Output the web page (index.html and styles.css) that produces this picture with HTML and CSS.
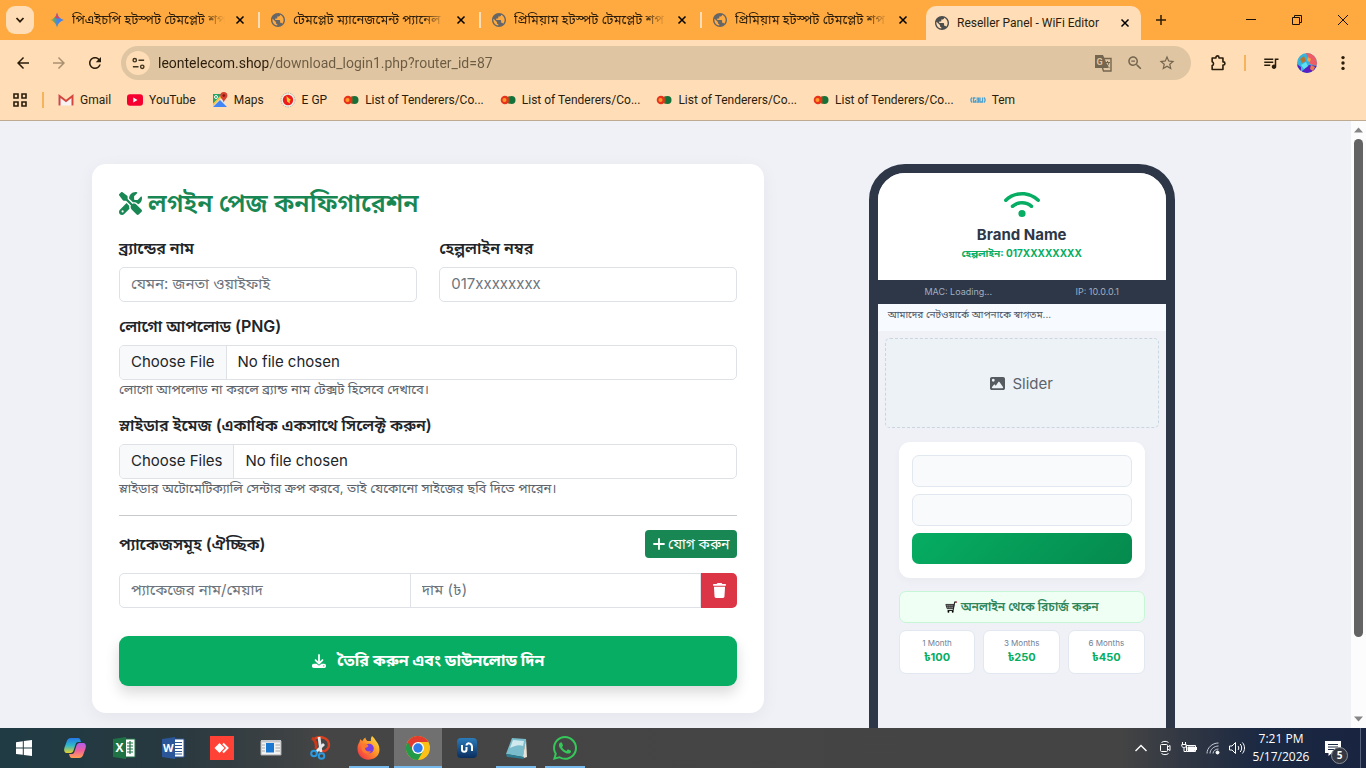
FILE: index.html
```html
<!DOCTYPE html>
<html lang="bn">
<head>
    <meta charset="UTF-8">
    <meta name="viewport" content="width=device-width, initial-scale=1.0">
    <title>Reseller Panel - WiFi Editor</title>
    <link rel="stylesheet" href="styles.css">
</head>
<body>
    <!-- Shared icons -->
    <svg class="sprite" aria-hidden="true">
        <symbol id="globe" viewBox="2 2 20 20"><path d="M12 2C6.48 2 2 6.48 2 12s4.48 10 10 10 10-4.48 10-10S17.52 2 12 2zm-1 17.93c-3.95-.49-7-3.85-7-7.93 0-.62.08-1.21.21-1.79L9 15v1c0 1.1.9 2 2 2v1.93zm6.9-2.54c-.26-.81-1-1.39-1.9-1.39h-1v-3c0-.55-.45-1-1-1H8v-2h2c.55 0 1-.45 1-1V7h2c1.1 0 2-.9 2-2v-.41c2.93 1.19 5 4.06 5 7.41 0 2.08-.8 3.97-2.1 5.39z"/></symbol>
        <symbol id="close" viewBox="0 0 16 16"><path d="M4.500 4.500l7 7M11.500 4.500l-7 7" stroke="currentColor" stroke-width="1.500" fill="none"/></symbol>
        <symbol id="arrow" viewBox="0 0 24 24"><path d="M20 11H7.830l5.590-5.590L12 4l-8 8 8 8 1.410-1.410L7.830 13H20v-2z"/></symbol>
        <symbol id="tender" viewBox="0 0 16 16">
            <circle cx="11.500" cy="8" r="4" fill="#14713a"/>
            <circle cx="5" cy="8" r="4.300" fill="#e8321c"/>
            <circle cx="4.500" cy="8" r="2" fill="#ff9a2a"/>
            <path d="M9 4v8" stroke="#8b5a1c"/>
        </symbol>
    </svg>

    <header class="browser">
        <div class="tab-strip">
            <button class="tab-search" aria-label="Search tabs"><svg viewBox="0 0 16 16"><path d="M4.500 6l3.500 3.700L11.500 6" fill="none" stroke="#2b1d0b" stroke-width="1.800"/></svg></button>
            <div class="tab">
                <svg class="favicon" viewBox="1 1 14 14">
                    <defs><linearGradient id="gem" x1="0" y1="0" x2="1" y2="0"><stop offset="0" stop-color="#f9a825"/><stop offset=".3" stop-color="#5fa56b"/><stop offset=".55" stop-color="#4285f4"/><stop offset="1" stop-color="#3f7de8"/></linearGradient></defs>
                    <path d="M8 .5C9.300 5 11 6.700 15 8c-4 1.300-5.700 3-7 7.500C6.700 11 5 9.300 1 8c4-1.300 5.700-3 7-7.500z" fill="url(#gem)"/>
                    <path d="M8 .5c.8 3.500 1.500 5 3 6.200L6 6c1-1.300 1.500-3 2-5.500z" fill="#e4405a"/>
                </svg>
                <span class="tab-title">পিএইচপি হটস্পট টেমপ্লেট শপ</span>
                <button class="tab-close" aria-label="Close"><svg><use href="#close"/></svg></button>
                <i class="tab-line"></i>
            </div>
            <div class="tab">
                <svg class="favicon"><use href="#globe"/></svg>
                <span class="tab-title">টেমপ্লেট ম্যানেজমেন্ট প্যানেল</span>
                <button class="tab-close" aria-label="Close"><svg><use href="#close"/></svg></button>
                <i class="tab-line"></i>
            </div>
            <div class="tab">
                <svg class="favicon"><use href="#globe"/></svg>
                <span class="tab-title">প্রিমিয়াম হটস্পট টেমপ্লেট শপ</span>
                <button class="tab-close" aria-label="Close"><svg><use href="#close"/></svg></button>
                <i class="tab-line"></i>
            </div>
            <div class="tab">
                <svg class="favicon"><use href="#globe"/></svg>
                <span class="tab-title">প্রিমিয়াম হটস্পট টেমপ্লেট শপ</span>
                <button class="tab-close" aria-label="Close"><svg><use href="#close"/></svg></button>
                <i class="tab-line hidden"></i>
            </div>
            <div class="tab active">
                <svg class="favicon"><use href="#globe"/></svg>
                <span class="tab-title">Reseller Panel - WiFi Editor</span>
                <button class="tab-close" aria-label="Close"><svg><use href="#close"/></svg></button>
            </div>
            <button class="new-tab" aria-label="New tab"><svg viewBox="0 0 16 16"><path d="M8 3v10M3 8h10" stroke="#2b1d0b" stroke-width="1.500"/></svg></button>
            <div class="window-buttons">
                <button aria-label="Minimize"><svg viewBox="0 0 16 16"><path d="M3 7.500h10"/></svg></button>
                <button aria-label="Restore"><svg viewBox="0 0 16 16"><path d="M3.500 5.500h7v7h-7zM5.500 5.500v-2h7v7h-2"/></svg></button>
                <button aria-label="Close window"><svg viewBox="0 0 16 16"><path d="M3 3l10 10M13 3L3 13"/></svg></button>
            </div>
        </div>

        <div class="toolbar">
            <button aria-label="Back"><svg><use href="#arrow"/></svg></button>
            <button class="forward" aria-label="Forward"><svg><use href="#arrow"/></svg></button>
            <button aria-label="Reload"><svg viewBox="0 0 24 24"><path d="M17.650 6.350C16.200 4.900 14.210 4 12 4c-4.420 0-7.990 3.580-7.990 8s3.570 8 7.990 8c3.730 0 6.840-2.550 7.730-6h-2.080c-.82 2.330-3.040 4-5.650 4-3.310 0-6-2.690-6-6s2.690-6 6-6c1.660 0 3.140.69 4.220 1.780L13 11h7V4l-2.350 2.350z"/></svg></button>
            <div class="address">
                <button class="site-info" aria-label="Site information"><svg viewBox="0 0 16 16"><g fill="none" stroke="#40331f" stroke-width="1.500"><circle cx="4" cy="4.500" r="1.800"/><circle cx="12" cy="11.500" r="1.800"/><path d="M8 4.500h6M2 11.500h6"/></g></svg></button>
                <input type="text" aria-label="Address" value="leontelecom.shop/download_login1.php?router_id=87">
                <button aria-label="Translate"><svg viewBox="1 1 18 18"><path d="M2 2h8l5.500 13H2z" fill="#74664f"/><path d="M9.500 5.500H18v12.500h-7.500l-1-3" fill="none" stroke="#74664f" stroke-width="1.400"/><path d="M12 9.500h5M14.500 8v1.500M16 9.500c-.6 2.500-2 4-3.500 5M12.800 10.500c.8 2 2 3.300 3.700 4.200" fill="none" stroke="#74664f"/><text x="3.500" y="12" font-family="Roboto, sans-serif" font-size="9" font-weight="700" fill="#dfc5a2">G</text></svg></button>
                <button aria-label="Zoom"><svg viewBox="0 0 24 24"><path d="M15.500 14h-.79l-.28-.27C15.410 12.590 16 11.110 16 9.500 16 5.910 13.090 3 9.500 3S3 5.910 3 9.500 5.910 16 9.500 16c1.610 0 3.090-.59 4.230-1.570l.27.28v.79l5 4.990L20.490 19l-4.990-5zm-6 0C7.010 14 5 11.990 5 9.500S7.010 5 9.500 5 14 7.010 14 9.500 11.990 14 9.500 14zM7 8.600h5v1.800H7z"/></svg></button>
                <button aria-label="Bookmark"><svg viewBox="0 0 24 24"><path d="M22 9.240l-7.190-.62L12 2 9.190 8.630 2 9.240l5.460 4.730L5.820 21 12 17.270 18.180 21l-1.630-7.030L22 9.240zM12 15.400l-3.760 2.270 1-4.280-3.320-2.880 4.380-.38L12 6.100l1.710 4.040 4.380.38-3.320 2.880 1 4.280L12 15.400z"/></svg></button>
            </div>
            <button class="extensions" aria-label="Extensions"><svg viewBox="0 0 20 20"><path d="M3.500 4.500h4.200v-.7a1.700 1.700 0 0 1 3.400 0v.7h4.400v4.300h.5a1.700 1.700 0 0 1 0 3.400h-.5v5H3.500v-4.300a2.200 2.200 0 0 0 0-4.200z" fill="none" stroke="#2b1d0b" stroke-width="1.800" stroke-linejoin="round"/></svg></button>
            <i class="bar-line"></i>
            <button class="media" aria-label="Media"><svg viewBox="0 0 24 24"><path d="M15 6H3v2h12V6zm0 4H3v2h12v-2zM3 16h8v-2H3v2zM17 6v8.180c-.31-.11-.65-.18-1-.18-1.660 0-3 1.340-3 3s1.340 3 3 3 3-1.340 3-3V8h3V6h-5z"/></svg></button>
            <button class="profile" aria-label="Profile"><svg viewBox="0 0 20 20"><defs><clipPath id="round"><circle cx="10" cy="10" r="10"/></clipPath></defs><g clip-path="url(#round)"><path fill="#35b4dd" d="M0 0h20v20H0z"/><path d="M9 0h11v13l-7-2z" fill="#ee5c66"/><path d="M3 20l9-8 8 1v7z" fill="#5a1fc2"/><path d="M3 6l4-3 2 5-4 2z" fill="#b9772c"/><path d="M11 4l3 2-1 3-3-1z" fill="#f3a04c"/><path d="M4 12l5-3 2 4-4 3z" fill="#5fe0ee"/><path d="M0 11l4 3v6H0z" fill="#5a1fc2"/><path d="M14 12l4 2-2 4-3-2z" fill="#e97b4a"/></g></svg></button>
            <button aria-label="Menu"><svg viewBox="0 0 16 16"><circle cx="8" cy="3.200" r="1.500"/><circle cx="8" cy="8" r="1.500"/><circle cx="8" cy="12.800" r="1.500"/></svg></button>
        </div>

        <nav class="bookmarks">
            <button class="apps" aria-label="Apps"><svg viewBox="0 0 16 16"><path d="M2 2h4v4H2zM10 2h4v4h-4zM2 10h4v4H2zM10 10h4v4h-4z" fill="none" stroke="#2b1d0b" stroke-width="1.600"/></svg></button>
            <i class="bar-line"></i>
            <a href="#"><svg viewBox="0 0 16 16"><path d="M.5 3.500L8 9l7.500-5.500V13.500H.5z" fill="#f6f3f2"/><path d="M1.500 13.500v-9.500L8 9l6.500-5v9.500" fill="none" stroke="#d4453c" stroke-width="2"/></svg>Gmail</a>
            <a href="#"><svg viewBox="0 0 16 16"><rect y="2.300" width="16" height="11.500" rx="3" fill="#f6002f"/><path d="M6.300 5.500v5l4.200-2.500z" fill="#fff"/></svg>YouTube</a>
            <a href="#"><svg viewBox="0 0 16 16"><path d="M1 2h12v13H1z" fill="#e8e4dc"/><path d="M1 2h9L1 12z" fill="#23a566"/><path d="M1 15l7-7 7 7z" fill="#4285f4"/><path d="M1 11.500L10.500 2H13L1 14z" fill="#f6c63a"/><path d="M11.800 0a3.600 3.600 0 0 1 3.600 3.600c0 2.700-2.600 3.400-3.600 7-1-3.600-3.600-4.300-3.600-7A3.600 3.600 0 0 1 11.800 0z" fill="#d8402f"/><circle cx="11.800" cy="3.600" r="1.300" fill="#7c1a14"/><circle cx="4" cy="5" r="1.500" fill="none" stroke="#fff"/></svg>Maps</a>
            <a href="#"><svg viewBox="0 0 16 16"><circle cx="8" cy="8" r="7" fill="#f0ede4" stroke="#b9b5a5" stroke-dasharray="1.500 1"/><circle cx="8" cy="8" r="5.200" fill="#ee1c1c"/><path d="M6.500 4l2 2 2.500 2-1.500.8.5 2.700-3-2z" fill="#ffcf2f"/></svg>E GP</a>
            <a href="#"><svg><use href="#tender"/></svg>List of Tenderers/Co...</a>
            <a href="#"><svg><use href="#tender"/></svg>List of Tenderers/Co...</a>
            <a href="#"><svg><use href="#tender"/></svg>List of Tenderers/Co...</a>
            <a href="#"><svg><use href="#tender"/></svg>List of Tenderers/Co...</a>
            <a href="#"><svg viewBox="0 0 16 16"><g fill="none" stroke="#4a9fd0" stroke-width="1.300"><path d="M2 5.500c-1.300 1.500-1.300 3.500 0 5M14 5.500c1.300 1.500 1.300 3.500 0 5M5.500 6H3.500v4h2V8M6.500 6.200h2v1.600h-2M8.500 8v2h-2M10 5.500V10h2.500V5.500"/></g></svg>Tem</a>
        </nav>
    </header>

    <div class="viewport">
        <main class="row">
            <div class="col-form">
                <form class="panel">
                    <h1><svg viewBox="0 0 512 512"><path d="M78.600 5C69.100-2.400 55.600-1.500 47 7L7 47c-8.500 8.500-9.400 22-2.100 31.600l80 104c4.500 5.900 11.600 9.400 19 9.400h54.100l109 109c-14.700 29-10 65.400 14.300 89.600l112 112c12.500 12.500 32.800 12.500 45.300 0l64-64c12.500-12.500 12.500-32.800 0-45.300l-112-112c-24.200-24.200-60.600-29-89.600-14.300l-109-109V104c0-7.500-3.500-14.500-9.400-19L78.600 5zM19.900 396.100C7.200 408.800 0 426.100 0 444.100C0 481.600 30.400 512 67.900 512c18 0 35.300-7.200 48-19.900L233.700 374.300c-7.800-20.900-9-43.600-3.600-65.100l-61.700-61.700L19.900 396.100zM512 144c0-10.500-1.100-20.700-3.200-30.500c-2.400-11.200-16.100-14.100-24.200-6l-63.900 63.900c-3 3-7.100 4.700-11.300 4.700H352c-8.800 0-16-7.200-16-16V102.600c0-4.200 1.700-8.300 4.700-11.300l63.900-63.900c8.100-8.100 5.200-21.800-6-24.200C388.700 1.100 378.500 0 368 0C288.500 0 224 64.500 224 144l0 .8 85.300 85.300c36-9.100 75.800 .5 104 28.700L429 274.500c49-23 83-72.800 83-130.500zM56 432a24 24 0 1 1 48 0 24 24 0 1 1 -48 0z"/></svg>লগইন পেজ কনফিগারেশন</h1>

                    <div class="two-cols">
                        <div class="field">
                            <label for="brand">ব্র্যান্ডের নাম</label>
                            <input class="control" type="text" id="brand" placeholder="যেমন: জনতা ওয়াইফাই">
                        </div>
                        <div class="field">
                            <label for="helpline">হেল্পলাইন নম্বর</label>
                            <input class="control" type="text" id="helpline" placeholder="017xxxxxxxx">
                        </div>
                    </div>

                    <div class="field">
                        <label for="logo">লোগো আপলোড (PNG)</label>
                        <input class="control" type="file" id="logo" accept="image/png">
                        <small>লোগো আপলোড না করলে ব্র্যান্ড নাম টেক্সট হিসেবে দেখাবে।</small>
                    </div>

                    <div class="field">
                        <label for="slides">স্লাইডার ইমেজ (একাধিক একসাথে সিলেক্ট করুন)</label>
                        <input class="control" type="file" id="slides" multiple>
                        <small>স্লাইডার অটোমেটিক্যালি সেন্টার ক্রপ করবে, তাই যেকোনো সাইজের ছবি দিতে পারেন।</small>
                    </div>

                    <hr>

                    <div class="package-head">
                        <h2>প্যাকেজসমূহ (ঐচ্ছিক)</h2>
                        <button type="button" class="add-button"><svg viewBox="0 0 12 12"><path d="M6 1v10M1 6h10" stroke="#fff" stroke-width="1.800" stroke-linecap="round"/></svg>যোগ করুন</button>
                    </div>

                    <div class="package-row">
                        <input class="control" type="text" aria-label="প্যাকেজের নাম/মেয়াদ" placeholder="প্যাকেজের নাম/মেয়াদ">
                        <input class="control" type="text" aria-label="দাম (৳)" placeholder="দাম (৳)">
                        <button type="button" class="delete-button" aria-label="Delete"><svg viewBox="0 0 448 512"><path d="M135.200 17.700L128 32H32C14.300 32 0 46.300 0 64S14.300 96 32 96H416c17.700 0 32-14.300 32-32s-14.300-32-32-32H320l-7.200-14.300C307.400 6.800 296.300 0 284.200 0H163.800c-12.100 0-23.200 6.800-28.600 17.700zM416 128H32L53.200 467c1.600 25.300 22.600 45 47.900 45H346.900c25.300 0 46.300-19.700 47.900-45L416 128z"/></svg></button>
                    </div>

                    <button type="submit" class="submit-button"><svg viewBox="0 0 512 512"><path d="M288 32c0-17.700-14.300-32-32-32s-32 14.300-32 32V274.700l-73.400-73.400c-12.500-12.500-32.800-12.500-45.300 0s-12.500 32.800 0 45.300l128 128c12.500 12.500 32.800 12.500 45.300 0l128-128c12.500-12.500 12.500-32.800 0-45.300s-32.800-12.500-45.300 0L288 274.700V32zM64 352c-35.300 0-64 28.700-64 64v32c0 35.300 28.700 64 64 64H448c35.300 0 64-28.700 64-64V416c0-35.300-28.700-64-64-64H346.500l-45.300 45.300c-25 25-65.500 25-90.500 0L165.500 352H64zm368 56a24 24 0 1 1 0 48 24 24 0 1 1 0-48z"/></svg>তৈরি করুন এবং ডাউনলোড দিন</button>
                </form>
            </div>

            <div class="col-preview">
                <section class="phone">
                    <div class="phone-head">
                        <svg viewBox="0 0 640 512"><path d="M54.200 202.900C123.200 136.700 216.800 96 320 96s196.800 40.700 265.800 106.900c12.800 12.200 33 11.800 45.200-.9s11.800-33-.9-45.200C549.700 79.500 440.400 32 320 32S90.300 79.500 9.800 156.700C-2.900 169-3.300 189.200 8.900 202s32.500 13.200 45.200 .9zM320 256c56.800 0 108.600 21.100 148.200 56c13.300 11.700 33.500 10.400 45.200-2.800s10.400-33.500-2.800-45.200C459.800 219.200 393 192 320 192s-139.800 27.200-190.500 72c-13.300 11.700-14.500 31.900-2.800 45.200s31.900 14.500 45.200 2.800c39.500-34.900 91.300-56 148.200-56zm64 160a64 64 0 1 0 -128 0 64 64 0 1 0 128 0z"/></svg>
                        <h3>Brand Name</h3>
                        <p>হেল্পলাইন: 017XXXXXXXX</p>
                    </div>
                    <div class="phone-info"><span>MAC: Loading...</span><span>IP: 10.0.0.1</span></div>
                    <div class="phone-notice">আমাদের নেটওয়ার্কে আপনাকে স্বাগতম...</div>
                    <div class="phone-slider"><svg viewBox="0 0 512 512"><path d="M0 96C0 60.700 28.700 32 64 32H448c35.300 0 64 28.700 64 64V416c0 35.300-28.700 64-64 64H64c-35.300 0-64-28.700-64-64V96zM323.800 202.500c-4.500-6.600-11.900-10.500-19.800-10.500s-15.400 3.900-19.800 10.500l-87 127.600L170.700 297c-4.600-5.700-11.500-9-18.700-9s-14.200 3.300-18.700 9l-64 80c-5.800 7.200-6.900 17.100-2.900 25.400s12.400 13.600 21.600 13.600h96 32H424c8.900 0 17.100-4.900 21.200-12.800s3.600-17.400-1.400-24.700l-120-176zM112 192a48 48 0 1 0 0-96 48 48 0 1 0 0 96z"/></svg>Slider</div>
                    <div class="phone-login">
                        <input type="text" aria-label="Username">
                        <input type="password" aria-label="Password">
                        <button type="button" aria-label="Login"></button>
                    </div>
                    <a class="recharge" href="#"><svg viewBox="0 0 14 14"><path d="M1 4h9.500l-.8 5H2.500z" fill="#999" stroke="#222"/><path d="M3.500 4.500l.5 4M6 4.500v4M8.300 4.500L8 8.500M1.500 6.200h8.700" stroke="#222" stroke-width=".7"/><path d="M13.500 1.300h-2.200L9.500 11H3" fill="none" stroke="#222" stroke-width="1.200"/><path d="M12 1.300h1.800" stroke="#c33" stroke-width="1.600"/><circle cx="4" cy="12.500" r="1.100"/><circle cx="9" cy="12.500" r="1.100"/></svg>অনলাইন থেকে রিচার্জ করুন</a>
                    <div class="plans">
                        <div class="plan"><span>1 Month</span><b>৳100</b></div>
                        <div class="plan"><span>3 Months</span><b>৳250</b></div>
                        <div class="plan"><span>6 Months</span><b>৳450</b></div>
                    </div>
                </section>
            </div>
        </main>

        <div class="scrollbar">
            <svg viewBox="0 0 15 15"><path d="M3 10l4.500-5 4.500 5z"/></svg>
            <i class="thumb"></i>
            <svg viewBox="0 0 15 15"><path d="M3 5l4.500 5 4.500-5z"/></svg>
        </div>
    </div>

    <footer class="taskbar">
        <button class="start" aria-label="Start"><svg viewBox="0 0 24 24"><path d="M4 6.200l6.800-1v6.300H4zM11.800 5.100L20 4v7.500h-8.200zM4 12.500h6.800v6.300L4 17.900zM11.800 12.500H20V20l-8.200-1.100z" fill="#fff"/></svg></button>
        <button aria-label="Copilot"><svg viewBox="0 0 24 24"><defs><linearGradient id="cpl" x1="0" y1="0" x2="0" y2="1"><stop offset="0" stop-color="#2478e8"/><stop offset=".5" stop-color="#2fb8c8"/><stop offset="1" stop-color="#e8d02a"/></linearGradient><linearGradient id="cpr" x1="0" y1="0" x2="0" y2="1"><stop offset="0" stop-color="#b15cf0"/><stop offset=".5" stop-color="#ee5f9c"/><stop offset="1" stop-color="#ffa052"/></linearGradient></defs><path d="M8 2h7c2 0 2.500 2 3 4h-3c-1.500 0-2 1-2.500 2.500l-2 6C10 16 9 17 7.500 17H4.500c-3 0-4-2-3-5.500L3.500 6C4.300 3.300 5.500 2 8 2z" fill="url(#cpl)"/><path d="M16 22H9c-2 0-2.500-2-3-4h3c1.500 0 2-1 2.500-2.500l2-6C14 8 15 7 16.500 7h3c3 0 4 2 3 5.500L20.500 18c-.8 2.700-2 4-4.500 4z" fill="url(#cpr)"/></svg></button>
        <button aria-label="Excel"><svg viewBox="0 0 24 24"><path d="M12 3h11v18H12z" fill="#fff" stroke="#1f7244"/><path d="M15 7h6M15 10h6M15 13h6M15 16h6M18 5v13" stroke="#1f7244" stroke-width="1.200"/><path d="M1 3l13-2v22L1 21z" fill="#1f7244"/><text x="3.500" y="16" font-family="Open Sans, sans-serif" font-size="12" font-weight="700" fill="#fff">X</text></svg></button>
        <button aria-label="Word"><svg viewBox="0 0 24 24"><path d="M12 3h11v18H12z" fill="#fff" stroke="#2b5797"/><path d="M14 6.500h7M14 9.500h7M14 12.500h7M14 15.500h7M14 18h7" stroke="#2b5797" stroke-width="1.200"/><path d="M1 3l13-2v22L1 21z" fill="#2b579a"/><text x="2" y="16" font-family="Open Sans, sans-serif" font-size="11" font-weight="700" fill="#fff">W</text></svg></button>
        <button aria-label="AnyDesk"><svg viewBox="0 0 24 24"><path fill="#ff4136" d="M0 0h24v24H0z"/><path d="M9.500 7l5 5-5 5-5-5z" fill="#fff"/><path d="M13 7.500l4.500 4.500-4.500 4.500" fill="none" stroke="#fff" stroke-width="2"/></svg></button>
        <button aria-label="Run"><svg viewBox="0 0 24 24"><path d="M2 5h20v14H2z" fill="#f2f2f2" stroke="#aaa"/><path d="M2 4h20v2.500H2z" fill="#c5c8ca"/><path d="M7 7h8v9.500H7z" fill="#1a78d2"/><path d="M3 9h3M3 12h3M3 15h3M16.500 9H21M16.500 12H21M16.500 15H21" stroke="#aaa"/></svg></button>
        <button aria-label="Snipping Tool"><svg viewBox="0 0 24 24"><path d="M6 3c6-4 15-1 15 6 0 4-4 7-8 6" fill="none" stroke="#d8401f" stroke-width="2.500"/><path d="M4 2c3 2 5 6 4 11" fill="none" stroke="#c8381a" stroke-width="3"/><path d="M11 1l2 15M16 8l-8 8" stroke="#e4e6e8" stroke-width="2.800"/><circle cx="6" cy="17.500" r="2.800" fill="none" stroke="#2b9ae0" stroke-width="2"/><circle cx="13.500" cy="20" r="2.800" fill="none" stroke="#2b9ae0" stroke-width="2"/></svg></button>
        <button class="open" aria-label="Firefox"><svg viewBox="0 0 24 24"><defs><linearGradient id="ff" x1="1" y1="0" x2="0" y2="1"><stop offset="0" stop-color="#fff04a"/><stop offset=".45" stop-color="#ff9428"/><stop offset="1" stop-color="#f0214e"/></linearGradient></defs><path d="M15 0c2 2 3 3 4 5 3 3 5 9 2 14-4 6-14 6-18 1C0 16-.5 10 2.500 6c0-1 .5-2 1-3 .5 1 1 1.500 2 2 .5-1.500 1.500-2.500 3-3.500 0 1.500.5 2.500 2 3.500L14 5c-.5-2 0-3.500 1-5z" fill="url(#ff)"/><circle cx="12" cy="12.500" r="4.800" fill="#7a3fe0"/><path d="M5 8c3-1 4 0 6 1 1 2-1 2-3 3 0 3 3 4 6 3-2 4-8 3-9-1-.5-2-.5-4 0-6z" fill="#ff7a30"/></svg></button>
        <button class="open current" aria-label="Chrome"><svg viewBox="0 0 24 24"><circle cx="12" cy="12" r="12" fill="#fbc116"/><path d="M12 12L1.600 6A12 12 0 0 0 12 24l5.200-9z" fill="#23994a"/><path d="M1.600 6a12 12 0 0 1 20.800 0H12l-5 9z" fill="#e33b2e"/><circle cx="12" cy="12" r="6" fill="#fff"/><circle cx="12" cy="12" r="4.700" fill="#2f7bea"/></svg></button>
        <button aria-label="uTools"><svg viewBox="0 0 24 24"><defs><linearGradient id="ut" x1="0" y1="0" x2="0" y2="1"><stop offset="0" stop-color="#2a7cbb"/><stop offset="1" stop-color="#0b2d5e"/></linearGradient></defs><rect x="2" y="2" width="20" height="20" rx="4" fill="url(#ut)"/><path d="M7 9v4.500c0 3 4.500 3 4.500 0V11M11.500 9.500c0-3 5-3 5.500 1V15" fill="none" stroke="#fff" stroke-width="2"/></svg></button>
        <button class="open" aria-label="Notepad"><svg viewBox="0 0 24 24"><path d="M8 2l14 1-3 18-17-3z" fill="#79bccb"/><path d="M9 4l11 1-1 5C15 8 10 10 6 12z" fill="#cfe9ee"/><path d="M2 18l17 3 1 2-17-2z" fill="#2c7c92"/><path d="M22 3l1 18-3 1-1-2z" fill="#e7e2d6"/></svg></button>
        <button class="open" aria-label="WhatsApp"><svg viewBox="0 32 448 448"><path fill="#35c759" d="M380.900 97.100C339 55.100 283.200 32 223.900 32c-122.400 0-222 99.600-222 222 0 39.100 10.200 77.300 29.600 111L0 480l117.700-30.900c32.400 17.700 68.900 27 106.100 27h.1c122.300 0 224.100-99.600 224.100-222 0-59.300-25.200-115-67.100-157zm-157 341.600c-33.200 0-65.700-8.900-94-25.700l-6.700-4-69.800 18.300L72 359.200l-4.400-7c-18.500-29.400-28.200-63.300-28.200-98.200 0-101.700 82.800-184.500 184.600-184.500 49.300 0 95.600 19.200 130.400 54.100 34.800 34.900 56.200 81.200 56.100 130.500 0 101.800-84.900 184.600-186.600 184.600zm101.200-138.200c-5.500-2.800-32.800-16.200-37.900-18-5.100-1.900-8.800-2.800-12.500 2.800-3.700 5.600-14.300 18-17.600 21.800-3.200 3.700-6.500 4.200-12 1.400-32.600-16.300-54-29.100-75.500-66-5.700-9.800 5.700-9.100 16.300-30.300 1.800-3.700.9-6.900-.5-9.700-1.400-2.800-12.500-30.100-17.100-41.200-4.500-10.800-9.100-9.300-12.500-9.500-3.200-.2-6.900-.2-10.600-.2-3.700 0-9.700 1.400-14.800 6.900-5.100 5.600-19.400 19-19.400 46.300 0 27.300 19.900 53.700 22.600 57.400 2.800 3.700 39.100 59.700 94.800 83.800 35.200 15.200 49 16.500 66.600 13.900 10.700-1.600 32.800-13.400 37.400-26.400 4.600-13 4.600-24.100 3.200-26.400-1.300-2.500-5-3.900-10.500-6.600z"/></svg></button>
        <div class="tray">
            <svg viewBox="0 0 16 16"><path d="M2.500 11L8 5.500l5.500 5.500" stroke-width="1.400"/></svg>
            <svg viewBox="0 0 16 16"><rect x="3.500" y="4.500" width="7" height="7" rx="1"/><path d="M10.500 7l2.500-1.500v5L10.500 9M4.500 2.500c2-1.500 5-1.500 7 0M4.500 13.500c2 1.500 5 1.500 7 0"/></svg>
            <svg viewBox="0 0 16 16"><path d="M5.500 5.500h9v6h-9zM15.500 7v3"/><path d="M7 7h6.500v3.500H7z" fill="#fff"/><path d="M1.500 2v2.500M4.500 2v2.500M.8 4.500h4.400v1.500c0 2-4.400 2-4.400 0zM3 8v3.500h2.500"/></svg>
            <svg viewBox="0 0 16 16"><path d="M2 13.500C2 8 7 3 13.500 3M5 13.500c0-4 4-7.500 8.500-7.500M8 13.500c0-2.500 2.500-4.500 5.500-4.500" stroke="#c8ccd4"/><circle cx="12.500" cy="12.500" r="1.500" fill="#fff"/></svg>
            <svg viewBox="0 0 16 16"><path d="M.5 6h2.500l3.500-3.500v11L3 10H.5zM9 6c1 1 1 3 0 4M11.200 4c2 2.200 2 5.800 0 8M13.400 2.500c2.800 3 2.800 8 0 11"/></svg>
        </div>
        <div class="clock"><span>7:21 PM</span><span>5/17/2026</span></div>
        <button class="notices" aria-label="Notifications">
            <svg viewBox="0 0 18 18"><path d="M1 2h16v12H8l-3.500 3v-3H1z" fill="#fff"/><path d="M4 5.500h10M4 8h10M4 10.500h6" stroke="#1c2942"/></svg>
            <span class="badge">5</span>
        </button>
    </footer>
</body>
</html>
```

FILE: styles.css
```css
* {
    box-sizing: border-box;
}
body {
    margin: 0;
    height: 100vh;
    overflow: hidden;
    display: flex;
    flex-direction: column;
    font-family: Inter, "Noto Sans Bengali", sans-serif;
    color: #212529;
    background-color: #eff1f6;
}
button {
    padding: 0;
    border: none;
    background: none;
    font-family: inherit;
    display: flex;
    align-items: center;
    justify-content: center;
}
.sprite {
    display: none;
}

/* Browser window */
.browser {
    flex: none;
    font-family: Roboto, "Noto Sans Bengali", sans-serif;
    color: #2b1d0b;
    background-color: #ffdeb7;
    border-bottom: 1px solid #bdaa90;
}
.tab-strip {
    display: flex;
    align-items: center;
    height: 40px;
    background-color: #ffaa40;
}
.tab-search {
    width: 28px;
    height: 28px;
    margin: 0 8px 0 6px;
    border-radius: 9px;
    background-color: #ffdeb7;
}
.tab-search svg,
.new-tab svg,
.window-buttons svg,
.tab-close svg,
.favicon {
    width: 16px;
    height: 16px;
}
.favicon {
    flex: none;
    padding: 1px;
    fill: #666;
}
.tab {
    flex: 0 1 221px;
    min-width: 0;
    height: 34px;
    display: flex;
    align-items: center;
    gap: 7px;
    padding: 0 3px 0 7px;
}
.tab-title {
    flex: 1;
    overflow: hidden;
    white-space: nowrap;
    font-size: 13px;
    line-height: 28px;
    mask-image: linear-gradient(to left, transparent, #000 24px);
}
.tab-close {
    width: 16px;
    height: 16px;
}
.tab-line {
    width: 2px;
    height: 16px;
    margin-left: 3px;
    background-color: #ffdeb7;
}
.tab-line.hidden {
    visibility: hidden;
}
.tab.active {
    flex-basis: 215px;
    align-self: flex-end;
    padding: 0 8px;
    border-radius: 10px 10px 0 0;
    background-color: #ffdeb7;
}
.active .favicon {
    fill: #4d4d4d;
}
.active .tab-title {
    font-size: 12px;
    mask-image: none;
}
.new-tab {
    width: 28px;
    height: 28px;
    margin-left: 6px;
}
.window-buttons {
    margin-left: auto;
    display: flex;
}
.window-buttons button {
    width: 46px;
    height: 40px;
}
.window-buttons path {
    fill: none;
    stroke: #1a1208;
}

.toolbar {
    display: flex;
    align-items: center;
    height: 46px;
    padding: 0 5px;
}
.toolbar button {
    flex: none;
    width: 36px;
    height: 34px;
}
.toolbar svg {
    width: 18px;
    height: 18px;
    fill: #2b1d0b;
}
.toolbar .forward svg {
    transform: rotate(180deg);
    opacity: 0.4;
}
.address {
    flex: 1;
    display: flex;
    align-items: center;
    height: 34px;
    margin: 0 9px 0 8px;
    padding: 0 8px 0 5px;
    border-radius: 17px;
    background-color: #dfc5a2;
}
.address .site-info {
    width: 24px;
    height: 24px;
    border-radius: 50%;
    background-color: #ffdeb7;
}
.address .site-info svg {
    width: 15px;
    height: 15px;
}
.address input {
    flex: 1;
    min-width: 0;
    padding: 0 8px;
    border: none;
    font-family: inherit;
    font-size: 14px;
    line-height: 30px;
    color: #6b5b43;
    background: linear-gradient(to right, #2b1d0b 118px, #6b5b43 118px);
    background-clip: text;
    -webkit-text-fill-color: transparent;
}
.address button {
    width: 32px;
}
.address button svg {
    fill: #74664f;
}
.bar-line {
    width: 2px;
    height: 16px;
    background-color: #f7b35c;
}
.toolbar .extensions {
    margin-right: 8px;
}
.toolbar .media {
    margin-left: 7px;
}
.toolbar .profile svg {
    width: 20px;
    height: 20px;
}

.bookmarks {
    display: flex;
    align-items: center;
    gap: 16px;
    height: 34px;
    padding: 0 12px 6px;
}
.bookmarks .bar-line {
    margin: 0 -2px;
}
.bookmarks svg {
    width: 16px;
    height: 16px;
}
.bookmarks a {
    display: flex;
    align-items: center;
    gap: 6px;
    font-size: 12px;
    line-height: 16px;
    white-space: nowrap;
    color: #2b1d0b;
    text-decoration: none;
}

/* Page area */
.viewport {
    flex: 1;
    min-height: 0;
    display: flex;
    overflow: hidden;
}
.row {
    display: flex;
    align-items: flex-start;
    width: 100%;
    max-width: 1187px;
    margin: 43px auto 0;
}
.col-form {
    width: 58.333%;
    padding: 0 10px;
}
.col-preview {
    width: 41.667%;
    padding: 0 10px;
}
.panel {
    padding: 27px;
    border-radius: 14px;
    background-color: #fff;
    box-shadow: 0 4px 18px rgba(0, 0, 0, 0.05);
}
.panel h1 {
    display: flex;
    align-items: center;
    gap: 6px;
    margin: 0 0 22px;
    font-size: 25px;
    line-height: 24px;
    font-weight: 600;
    color: #198754;
}
.panel h1 svg {
    width: 23px;
    height: 23px;
    fill: #198754;
}
.two-cols {
    display: grid;
    grid-template-columns: 1fr 1fr;
    gap: 22px;
}
.field {
    margin-bottom: 13px;
}
.field label,
.package-head h2 {
    font-size: 16px;
    line-height: 22px;
    font-weight: 600;
}
.field label {
    display: block;
    margin-bottom: 8px;
}
.field small {
    display: block;
    padding-bottom: 2px;
    font-size: 13px;
    line-height: 19px;
    color: #5c636a;
}
.control {
    display: block;
    width: 100%;
    height: 35px;
    padding: 4px 11px 6px;
    border: 1px solid #dee2e6;
    border-radius: 5px;
    font-family: inherit;
    font-size: 15px;
    line-height: 23px;
    color: #212529;
    background-color: #fff;
}
.control::placeholder {
    color: #6c757d;
    opacity: 1;
}
.control::file-selector-button {
    height: 33px;
    margin: -4px 11px -6px -11px;
    padding: 4px 11px 6px;
    border: none;
    border-right: 1px solid #dee2e6;
    font-family: inherit;
    font-size: 15px;
    color: #212529;
    background-color: #f8f9fa;
}
hr {
    margin: 15px 0 14px;
    border: none;
    border-top: 1px solid #c8cacc;
}
.package-head {
    display: flex;
    align-items: center;
    justify-content: space-between;
    margin-bottom: 15px;
}
.package-head h2 {
    margin: 0;
}
.add-button {
    gap: 3px;
    height: 28px;
    padding: 0 8px;
    border-radius: 4px;
    font-size: 14px;
    line-height: 20px;
    color: #fff;
    background-color: #198754;
}
.add-button svg {
    width: 12px;
    height: 12px;
}
.package-row {
    display: flex;
    margin-bottom: 28px;
}
.package-row .control {
    flex: 1;
    border-radius: 5px 0 0 5px;
}
.package-row .control + .control {
    margin-left: -1px;
    border-radius: 0;
}
.delete-button {
    flex: none;
    width: 36px;
    border-radius: 0 5px 5px 0;
    background-color: #dc3545;
}
.delete-button svg {
    width: 13px;
    height: 15px;
    fill: #fff;
}
.submit-button {
    gap: 11px;
    width: 100%;
    height: 50px;
    border-radius: 9px;
    font-size: 16px;
    font-weight: 700;
    color: #fff;
    background-color: #06ad62;
    box-shadow: 0 7px 14px rgba(0, 0, 0, 0.15);
}
.submit-button svg {
    width: 14px;
    height: 14px;
    fill: #fff;
}

/* Phone preview */
.phone {
    width: 306px;
    height: 650px;
    margin: 0 auto;
    border: 9px solid #2d3748;
    border-radius: 36px;
    overflow: hidden;
    background-color: #eff1f6;
}
.phone-head {
    height: 107px;
    padding-top: 16px;
    text-align: center;
    background-color: #fff;
}
.phone-head svg {
    display: block;
    width: 36px;
    height: 31px;
    margin: 0 auto 4px;
    fill: #06ad62;
}
.phone-head h3 {
    margin: 0;
    font-size: 15px;
    line-height: 22px;
    color: #2d3748;
}
.phone-head p {
    margin: 0;
    font-size: 10px;
    line-height: 15px;
    font-weight: 700;
    color: #06ad62;
}
.phone-info {
    display: flex;
    justify-content: space-around;
    padding: 0 5px;
    font-size: 9px;
    line-height: 23px;
    height: 24px;
    color: #a0aec0;
    background-color: #2d3748;
}
.phone-notice {
    height: 27px;
    padding: 0 10px;
    font-size: 10px;
    line-height: 20px;
    color: #4a5568;
    background-color: #f7fbff;
}
.phone-slider {
    display: flex;
    align-items: center;
    justify-content: center;
    gap: 7px;
    height: 90px;
    margin: 7px;
    border: 1px dashed #cbd5e0;
    border-radius: 5px;
    font-size: 15px;
    color: #5c636a;
    background-color: #edf2f7;
}
.phone-slider svg {
    width: 15px;
    height: 15px;
    fill: #555b61;
}
.phone-login {
    display: flex;
    flex-direction: column;
    gap: 7px;
    margin: 14px 21px 13px;
    padding: 13px 13px 14px;
    border-radius: 11px;
    background-color: #fff;
    box-shadow: 0 3px 9px rgba(0, 0, 0, 0.03);
}
.phone-login input {
    width: 100%;
    height: 32px;
    border: 1px solid #e2e8f0;
    border-radius: 7px;
    background-color: #f8fafc;
}
.phone-login button {
    height: 31px;
    border-radius: 7px;
    background: linear-gradient(135deg, #06ad62, #058a4e);
}
.recharge {
    display: flex;
    align-items: center;
    justify-content: center;
    gap: 4px;
    height: 32px;
    margin: 0 21px 7px;
    border: 1px solid #c6f6d5;
    border-radius: 7px;
    font-size: 12px;
    font-weight: 600;
    color: #2f855a;
    background-color: #f0fff4;
    text-decoration: none;
}
.recharge svg {
    width: 12px;
    height: 12px;
}
.plans {
    display: grid;
    grid-template-columns: repeat(3, 1fr);
    gap: 8px;
    margin: 0 21px;
}
.plan {
    display: flex;
    flex-direction: column;
    height: 44px;
    padding-top: 6px;
    border: 1px solid #e2e8f0;
    border-radius: 7px;
    text-align: center;
    background-color: #fff;
}
.plan span {
    font-size: 8px;
    line-height: 13px;
    color: #718096;
}
.plan b {
    font-size: 11px;
    line-height: 14px;
    color: #06ad62;
}

.scrollbar {
    flex: none;
    width: 15px;
    display: flex;
    flex-direction: column;
    align-items: center;
    background-color: #fcfcfc;
}
.scrollbar svg {
    width: 15px;
    height: 18px;
    fill: #858585;
}
.thumb {
    flex: none;
    width: 9px;
    height: 82%;
    margin-bottom: auto;
    border-radius: 5px;
    background-color: #636363;
}

/* Taskbar */
.taskbar {
    flex: none;
    display: flex;
    height: 40px;
    color: #fff;
    font-family: "Open Sans", sans-serif;
    background: linear-gradient(to right, #203b44, #27383f 12%, #454545 24%, #444 82%, #1c2942 92%, #182440);
    padding-right: 5px;
}
.taskbar button {
    position: relative;
    flex: none;
    width: 48px;
    margin-right: 1px;
}
.taskbar button svg {
    width: 24px;
    height: 24px;
}
.taskbar .start {
    margin-right: 3px;
}
.taskbar .current {
    background-color: #707070;
}
.open::after {
    content: "";
    position: absolute;
    left: 4px;
    right: 4px;
    bottom: 0;
    height: 2px;
    background-color: #76b9ed;
}
.current::after {
    left: 0;
    right: 0;
}
.tray {
    display: flex;
    align-items: center;
    gap: 8px;
    margin-left: auto;
}
.tray svg {
    width: 16px;
    height: 16px;
    fill: none;
    stroke: #fff;
}
.clock {
    display: flex;
    flex-direction: column;
    justify-content: center;
    width: 72px;
    font-size: 12px;
    line-height: 18px;
    text-align: center;
}
.taskbar .notices {
    width: 44px;
    margin: 0;
    padding-right: 12px;
    border-right: 1px solid #55607a;
}
.taskbar .notices svg {
    width: 18px;
    height: 18px;
}
.badge {
    position: absolute;
    left: 14px;
    top: 19px;
    width: 17px;
    height: 17px;
    border: 1px solid #8b8f98;
    border-radius: 50%;
    font-size: 10px;
    line-height: 15px;
    font-weight: 700;
    color: #fff;
    background-color: #333842;
}
```
